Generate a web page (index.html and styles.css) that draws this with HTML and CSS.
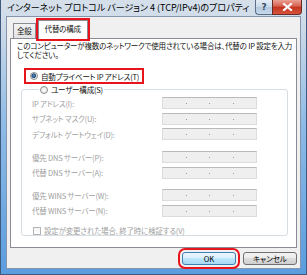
FILE: index.html
```html
<!DOCTYPE html>
<html>
<head>
  <meta charset="utf-8">
  <title>インターネット プロトコル バージョン 4 (TCP/IPv4)のプロパティ</title>
  <link rel="stylesheet" href="styles.css">
</head>
<body>
  <div class="window">
    <div class="titlebar">
      <span class="title">インターネット プロトコル バージョン 4 (TCP/IPv4)のプロパティ</span>
      <div class="caption">
        <span class="cap help">?</span>
        <span class="cap close">
          <svg width="11" height="8" viewBox="0 0 11 8"><path d="M2 1 L9 7 M9 1 L2 7" stroke="#fff" stroke-width="2.2" stroke-linecap="square"/></svg>
        </span>
      </div>
    </div>

    <div class="client">
      <div class="tabs">
        <span class="tab">全般</span>
        <span class="tab active mark">代替の構成</span>
      </div>

      <div class="panel">
        <p class="desc">このコンピューターが複数のネットワークで使用されている場合は、代替の IP 設定を入力してください。</p>

        <div class="option mark">
          <span class="radio on"></span>
          <span>自動プライベート IP アドレス(T)</span>
        </div>

        <fieldset class="group">
          <legend class="option">
            <span class="radio"></span>
            <span>ユーザー構成(S)</span>
          </legend>

          <div class="fields">
            <div class="field"><span class="label">IP アドレス(I):</span><span class="ipbox"><i></i><i></i><i></i></span></div>
            <div class="field"><span class="label">サブネット マスク(U):</span><span class="ipbox"><i></i><i></i><i></i></span></div>
            <div class="field"><span class="label">デフォルト ゲートウェイ(D):</span><span class="ipbox"><i></i><i></i><i></i></span></div>
          </div>

          <div class="fields sep">
            <div class="field"><span class="label">優先 DNS サーバー(P):</span><span class="ipbox"><i></i><i></i><i></i></span></div>
            <div class="field"><span class="label">代替 DNS サーバー(A):</span><span class="ipbox"><i></i><i></i><i></i></span></div>
          </div>

          <div class="fields sep">
            <div class="field"><span class="label">優先 WINS サーバー(W):</span><span class="ipbox"><i></i><i></i><i></i></span></div>
            <div class="field"><span class="label">代替 WINS サーバー(N):</span><span class="ipbox"><i></i><i></i><i></i></span></div>
          </div>

          <div class="check">
            <span class="box"></span>
            <span>設定が変更された場合、終了時に検証する(V)</span>
          </div>
        </fieldset>
      </div>

      <div class="buttons">
        <button class="btn default mark">OK</button>
        <button class="btn">キャンセル</button>
      </div>
    </div>
  </div>
</body>
</html>
```

FILE: styles.css
```css
* {
  box-sizing: border-box;
}
body {
  margin: 0;
  font-family: "Noto Sans CJK JP", "Noto Sans", sans-serif;
  font-feature-settings: "palt";
  font-size: 7.5px;
  letter-spacing: -0.2px;
  color: #111111;
}

/* Fensterrahmen */
.window {
  width: 307px;
  height: 275px;
  display: flex;
  flex-direction: column;
  padding: 0 5px 5px 5px;
  border: 1px solid #3f5a7c;
  border-top: none;
  background: linear-gradient(#d6e0eb 0, #cbd9e8 30px, #8fbbe6 45%, #5a9ddf 100%);
}
.titlebar {
  height: 16px;
  display: flex;
  align-items: flex-start;
  justify-content: space-between;
}
.title {
  font-size: 9px;
  letter-spacing: 0;
  line-height: 16px;
  padding-left: 1px;
  color: #000000;
  white-space: nowrap;
}
.caption {
  display: flex;
  margin-right: -1px;
}
.cap {
  height: 15px;
  display: flex;
  align-items: center;
  justify-content: center;
  border: 1px solid #5b6f88;
  border-top: none;
}
.help {
  width: 17px;
  border-radius: 0 0 0 4px;
  border-right: none;
  background: linear-gradient(#e4edf6 0, #cbd9e8 50%, #b3c7dd 50%, #c6d8ec 100%);
  font-family: "DejaVu Sans", sans-serif;
  font-size: 9px;
  font-weight: bold;
  color: #34495f;
}
.close {
  width: 30px;
  border-color: #6a2a24;
  border-radius: 0 0 4px 0;
  background: linear-gradient(#eba193 0, #d65f4f 45%, #c2331f 50%, #d6533c 100%);
}

/* Client-Bereich */
.client {
  flex: 1;
  display: flex;
  flex-direction: column;
  padding: 3px 3px 0 3px;
  border: 1px solid #8595ab;
  background: #f0f0f0;
}
.tabs {
  display: flex;
  align-items: flex-end;
  height: 19px;
  margin: 0 0 -1px 3px;
  position: relative;
  z-index: 1;
}
.tab {
  height: 15px;
  margin-bottom: 1px;
  padding: 0 3px;
  line-height: 14px;
  border: 1px solid #898c95;
  border-bottom: none;
  background: linear-gradient(#f3f3f3, #e3e3e3);
}
.tab.active {
  height: 19px;
  margin: 0 0 0 2px;
  padding: 0 6px;
  line-height: 15px;
  background: #ffffff;
}
.mark {
  outline: 2px solid #e8141c;
}

.panel {
  height: 210px;
  border: 1px solid #898c95;
  background: #ffffff;
}
.desc {
  margin: 0;
  padding: 1.5px 0 0 6px;
  line-height: 9px;
}

.option {
  display: flex;
  align-items: center;
  gap: 3px;
  height: 12px;
}
.panel > .option {
  width: max-content;
  margin: 11.5px 0 0 15px;
  padding: 0 3px 0 4px;
}
.radio {
  width: 8px;
  height: 8px;
  border-radius: 50%;
  border: 1px solid #8d8d8d;
  background: radial-gradient(#ffffff, #dcdcdc);
}
.radio.on {
  background: radial-gradient(circle at 45% 45%, #5a8fc4 0, #1f4f80 2px, #e9e9e9 2.6px);
}

.group {
  margin: 1.5px 8px 0 10px;
  padding: 1.5px 0 0 10px;
  border: 1px solid #d6dde3;
  border-radius: 3px;
}
.group legend {
  margin-left: 7px;
  padding: 0 1px;
}
.fields {
  display: flex;
  flex-direction: column;
  gap: 3.5px;
}
.fields.sep {
  margin-top: 11px;
}
.fields.sep + .fields.sep {
  margin-top: 10.5px;
}
.field {
  display: flex;
  align-items: center;
  height: 12px;
}
.label {
  width: 130px;
  color: #a0a0a0;
}
.ipbox {
  width: 95px;
  height: 12px;
  display: flex;
  justify-content: space-evenly;
  align-items: flex-end;
  padding-bottom: 4px;
  border: 1px solid #dcdcdc;
  border-top-color: #b9b9b9;
  background: #efefef;
}
.ipbox i {
  width: 1px;
  height: 1px;
  background: #9a9a9a;
}

.check {
  display: flex;
  align-items: center;
  gap: 3px;
  height: 9px;
  margin: 9.5px 0 0 1px;
  color: #a0a0a0;
}
.check .box {
  width: 8px;
  height: 8px;
  border: 1px solid #b5b5b5;
  background: linear-gradient(#f4f4f4, #ffffff);
}

/* Schaltflächen */
.buttons {
  display: flex;
  justify-content: flex-end;
  gap: 7px;
  margin-top: 4px;
}
.btn {
  width: 54px;
  height: 13px;
  padding: 0;
  font: inherit;
  line-height: 11px;
  color: #000000;
  border: 1px solid #707070;
  border-radius: 3px;
  background: linear-gradient(#f2f2f2 0, #ebebeb 50%, #dddddd 50%, #cfcfcf 100%);
}
.btn.default {
  border-color: #3c7fb1;
  background: linear-gradient(#eaf6fd 0, #d9f0fc 50%, #bee6fd 50%, #a7d9f5 100%);
  outline-offset: 2px;
}
```
